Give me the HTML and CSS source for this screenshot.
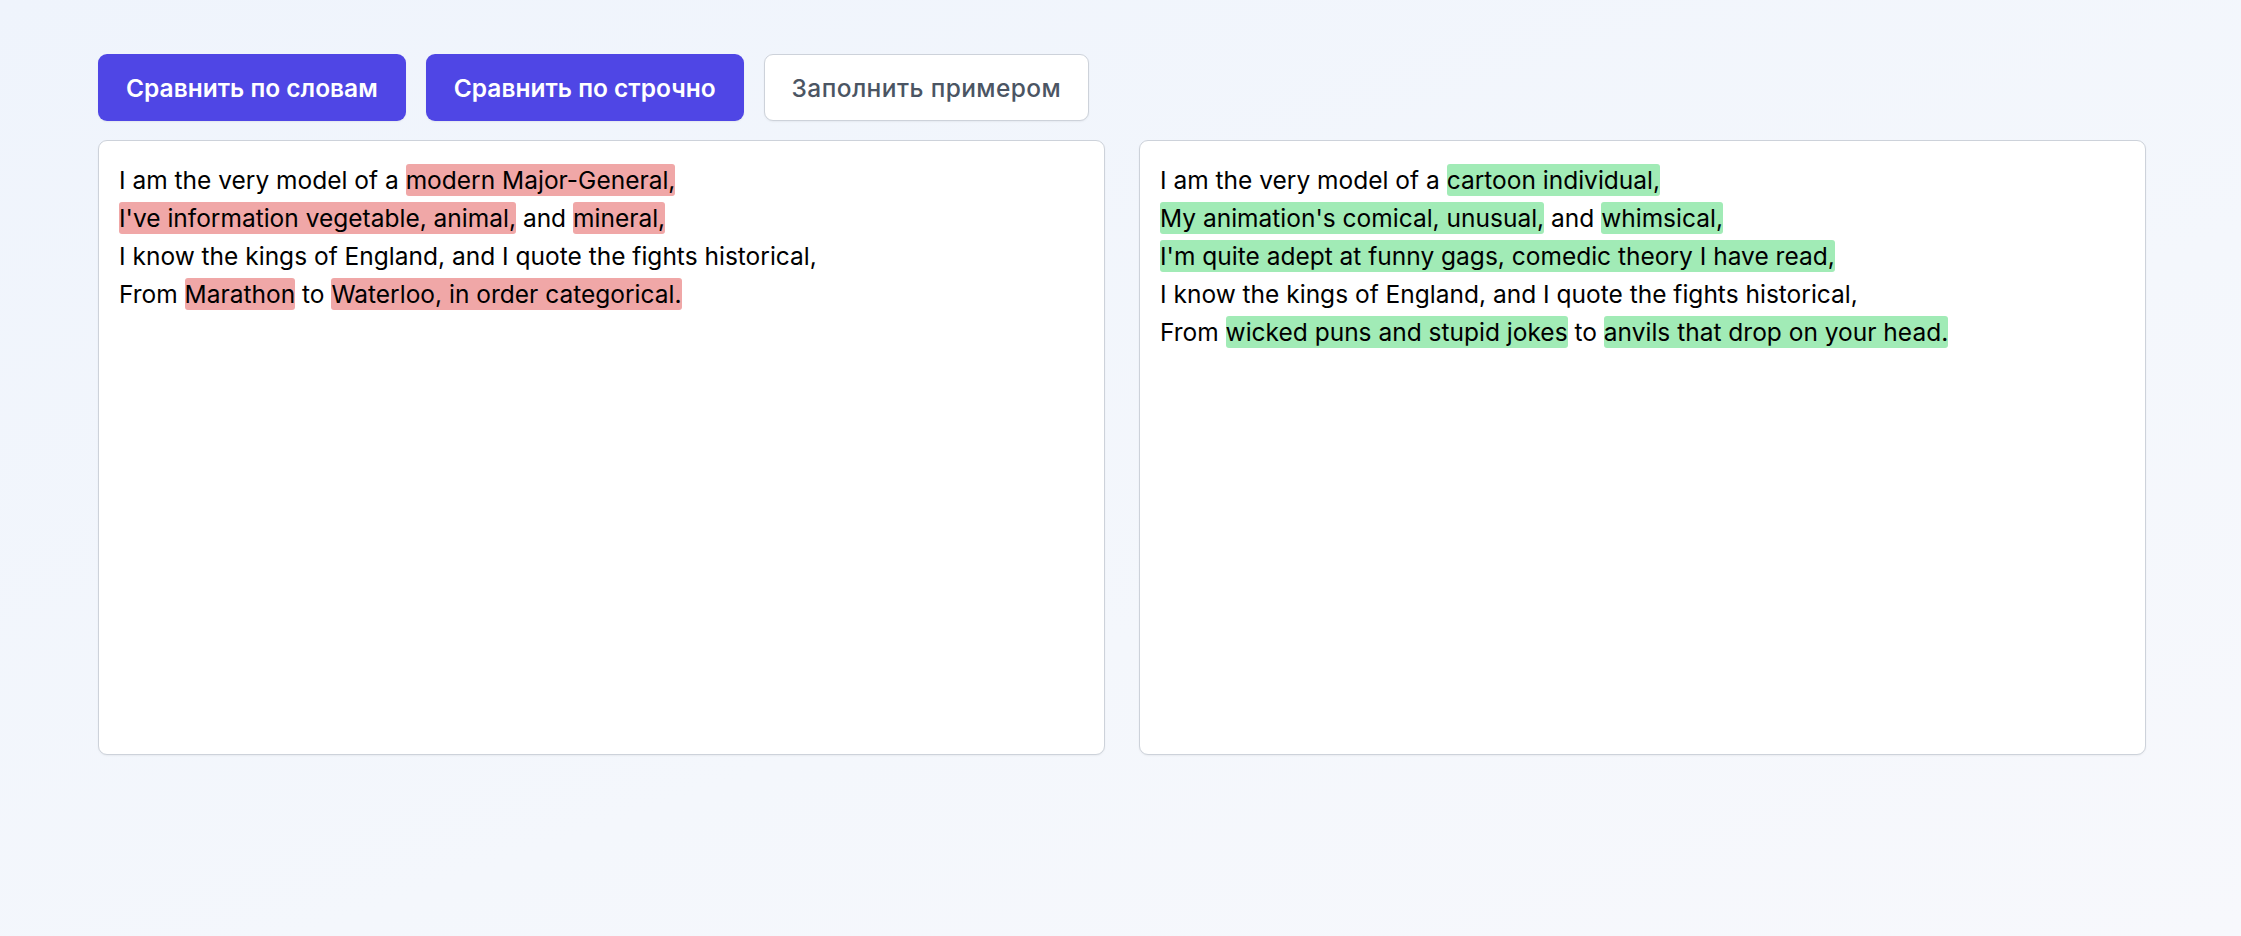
FILE: index.html
```html
<!DOCTYPE html>
<html lang="ru">
<head>
<meta charset="utf-8">
<title>Сравнение текстов</title>
<link rel="stylesheet" href="styles.css">
</head>
<body>
<main class="page">
  <div class="toolbar">
    <button class="btn btn-primary">Сравнить по словам</button>
    <button class="btn btn-primary">Сравнить по строчно</button>
    <button class="btn btn-outline">Заполнить примером</button>
  </div>
  <div class="panels">
    <div class="panel">
      <div class="line">I am the very model of a <span class="del">modern Major-General,</span></div>
      <div class="line"><span class="del">I've information vegetable, animal,</span> and <span class="del">mineral,</span></div>
      <div class="line">I know the kings of England, and I quote the fights historical,</div>
      <div class="line">From <span class="del">Marathon</span> to <span class="del">Waterloo, in order categorical.</span></div>
    </div>
    <div class="panel">
      <div class="line">I am the very model of a <span class="ins">cartoon individual,</span></div>
      <div class="line"><span class="ins">My animation's comical, unusual,</span> and <span class="ins">whimsical,</span></div>
      <div class="line"><span class="ins">I'm quite adept at funny gags, comedic theory I have read,</span></div>
      <div class="line">I know the kings of England, and I quote the fights historical,</div>
      <div class="line">From <span class="ins">wicked puns and stupid jokes</span> to <span class="ins">anvils that drop on your head.</span></div>
    </div>
  </div>
</main>
</body>
</html>
```
FILE: styles.css
```css
* { box-sizing: border-box; }

html, body {
  margin: 0;
  height: 100%;
}

body {
  background: linear-gradient(160deg, #eff4fc 0%, #f4f7fc 60%, #f7f8fc 100%);
  font-family: Inter, "Noto Sans", "Liberation Sans", sans-serif;
  color: #000;
}

.page {
  padding: 54px 95px 0 98px;
}

.toolbar {
  display: flex;
  gap: 20px;
  margin-bottom: 19px;
}

.btn {
  font-family: inherit;
  font-size: 24.5px;
  line-height: 36px;
  font-weight: 600;
  padding: 14.5px 27px;
  border-radius: 9px;
  border: 1px solid transparent;
  cursor: pointer;
}

.btn-primary {
  background: #4f46e5;
  color: #fff;
  box-shadow: 0 1px 2px rgba(0, 0, 0, 0.06);
}

.btn-outline {
  background: #fff;
  color: #4b5563;
  font-weight: 500;
  letter-spacing: 0.4px;
  border: 1.5px solid #cdd2da;
  box-shadow: 0 1px 2px rgba(0, 0, 0, 0.05);
}

.panels {
  display: grid;
  grid-template-columns: 1fr 1fr;
  gap: 34px;
}

.panel {
  height: 615px;
  background: #fff;
  border: 1.5px solid #cdd2da;
  border-radius: 9px;
  padding: 20px 20px 20px;
  font-size: 24.5px;
  line-height: 38px;
  box-shadow: 0 1px 2px rgba(0, 0, 0, 0.05);
}

.line {
  white-space: pre-wrap;
}

.del,
.ins {
  border-radius: 3px;
  padding: 1px 0;
}

.del { background: #f0a7a7; }
.ins { background: #a1ebb6; }
```
